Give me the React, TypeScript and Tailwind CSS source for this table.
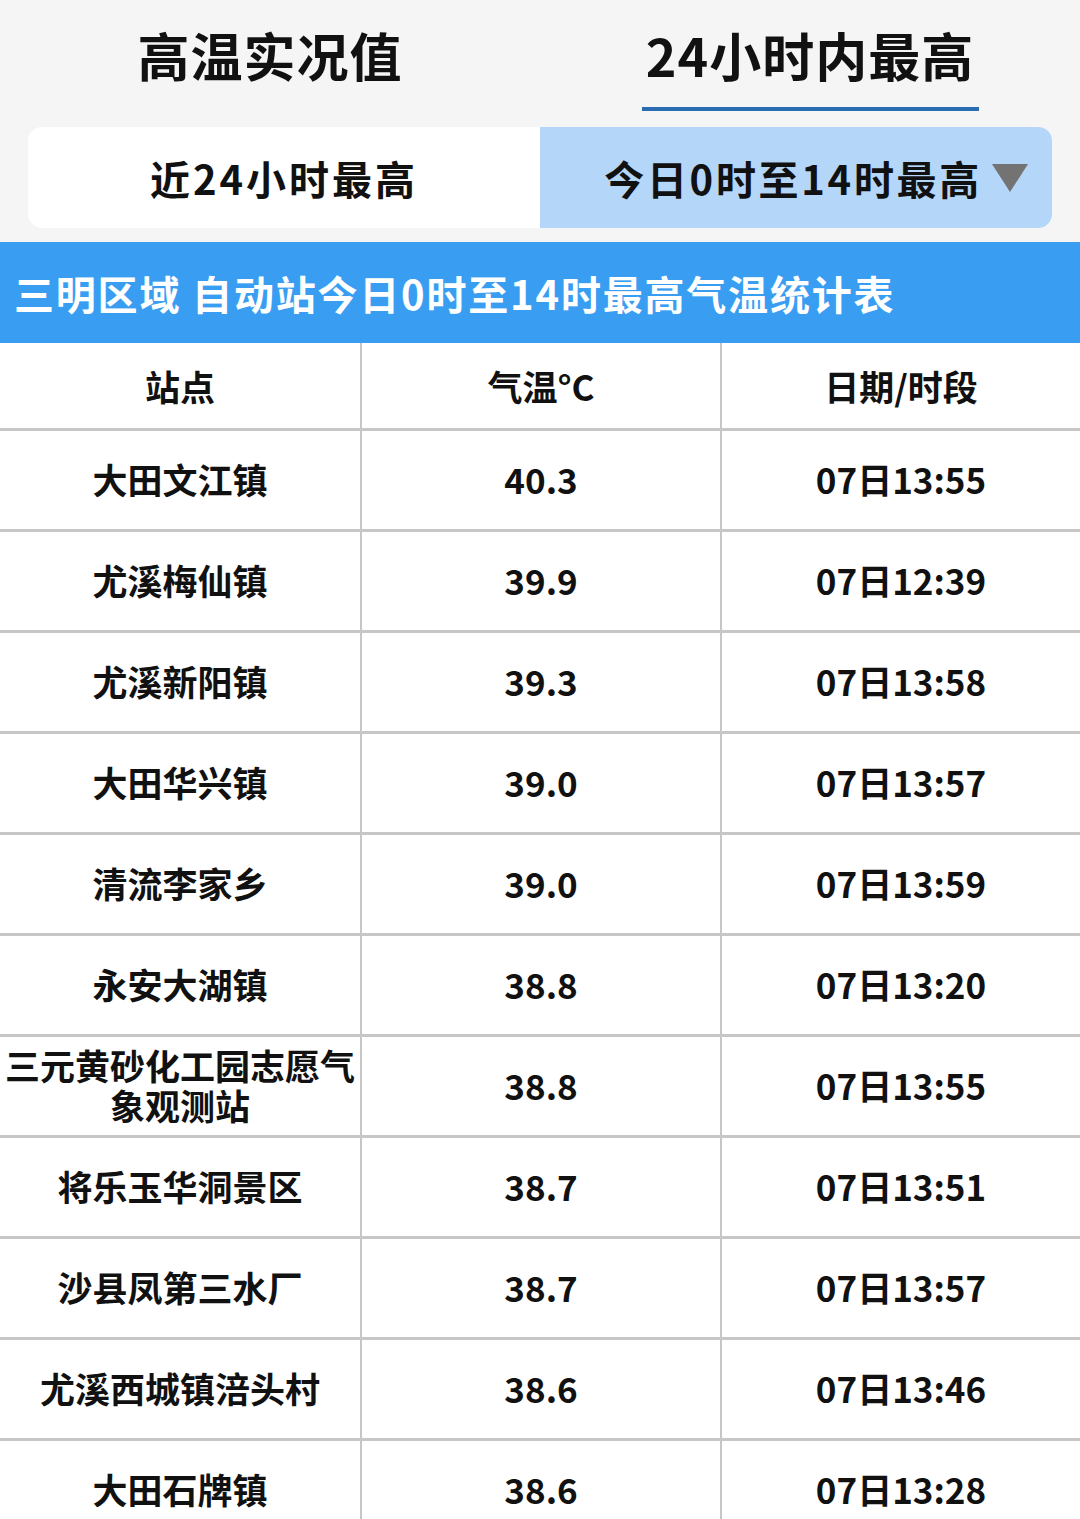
import React from 'react';

const rows: [string, string, string][] = [
  ['大田文江镇', '40.3', '07日13:55'],
  ['尤溪梅仙镇', '39.9', '07日12:39'],
  ['尤溪新阳镇', '39.3', '07日13:58'],
  ['大田华兴镇', '39.0', '07日13:57'],
  ['清流李家乡', '39.0', '07日13:59'],
  ['永安大湖镇', '38.8', '07日13:20'],
  ['三元黄砂化工园志愿气象观测站', '38.8', '07日13:55'],
  ['将乐玉华洞景区', '38.7', '07日13:51'],
  ['沙县凤第三水厂', '38.7', '07日13:57'],
  ['尤溪西城镇涪头村', '38.6', '07日13:46'],
  ['大田石牌镇', '38.6', '07日13:28'],
];

const font = { fontFamily: '"Noto Sans CJK SC", "Noto Sans", sans-serif' };

function Cell({ children, last }: { children: React.ReactNode; last?: boolean }) {
  return (
    <div className={`flex items-center justify-center text-center leading-[40px] ${last ? '' : 'border-r-[2px] border-[#c6c6c6]'}`}>
      {children}
    </div>
  );
}

export default function App() {
  return (
    <div className="w-[1080px] h-[1519px] overflow-hidden bg-white text-[#111]" style={font}>
      {/* top tabs + segment */}
      <div className="bg-[#f5f5f5] pb-[14px]">
        <div className="grid grid-cols-2 h-[112px]">
          <div className="flex items-start justify-center pt-[24px]">
            <span className="text-[52px] font-bold leading-[62px] tracking-[1px]">高温实况值</span>
          </div>
          <div className="flex flex-col items-center pt-[24px]">
            <span className="text-[52px] font-bold leading-[62px] tracking-[1px]">24小时内最高</span>
            <div className="w-[337px] h-[4px] bg-[#2a6cb2] mt-[21px]" />
          </div>
        </div>
        <div className="mx-[28px] mt-[15px] h-[101px] rounded-[14px] overflow-hidden grid grid-cols-2">
          <div className="bg-white flex items-center justify-center">
            <span className="text-[40px] font-bold tracking-[3px]">近24小时最高</span>
          </div>
          <div className="bg-[#b4d6f8] flex items-center justify-end pr-[24px] gap-[10px]">
            <span className="text-[40px] font-bold tracking-[2.7px]">今日0时至14时最高</span>
            <svg width="36" height="28" viewBox="0 0 36 28">
              <path d="M0 0 L36 0 L18 28 Z" fill="#737373" />
            </svg>
          </div>
        </div>
      </div>

      {/* banner */}
      <div className="bg-[#399ef2] h-[101px] flex items-center pl-[14px]">
        <span className="text-white text-[40px] font-bold tracking-[1.8px]">三明区域 自动站今日0时至14时最高气温统计表</span>
      </div>

      {/* table */}
      <div className="text-[35px] font-bold">
        <div className="grid grid-cols-[362px_360px_358px] h-[88px] border-b-[3px] border-[#c6c6c6]">
          <Cell>站点</Cell>
          <Cell>气温°C</Cell>
          <Cell last>日期/时段</Cell>
        </div>
        {rows.map(([name, temp, time]) => (
          <div key={name} className="grid grid-cols-[362px_360px_358px] h-[101px] border-b-[3px] border-[#c6c6c6]">
            <Cell><span className="px-[2px] mt-[-3px]">{name}</span></Cell>
            <Cell><span className="mt-[-3px]">{temp}</span></Cell>
            <Cell last><span className="mt-[-3px]">{time}</span></Cell>
          </div>
        ))}
      </div>
    </div>
  );
}
